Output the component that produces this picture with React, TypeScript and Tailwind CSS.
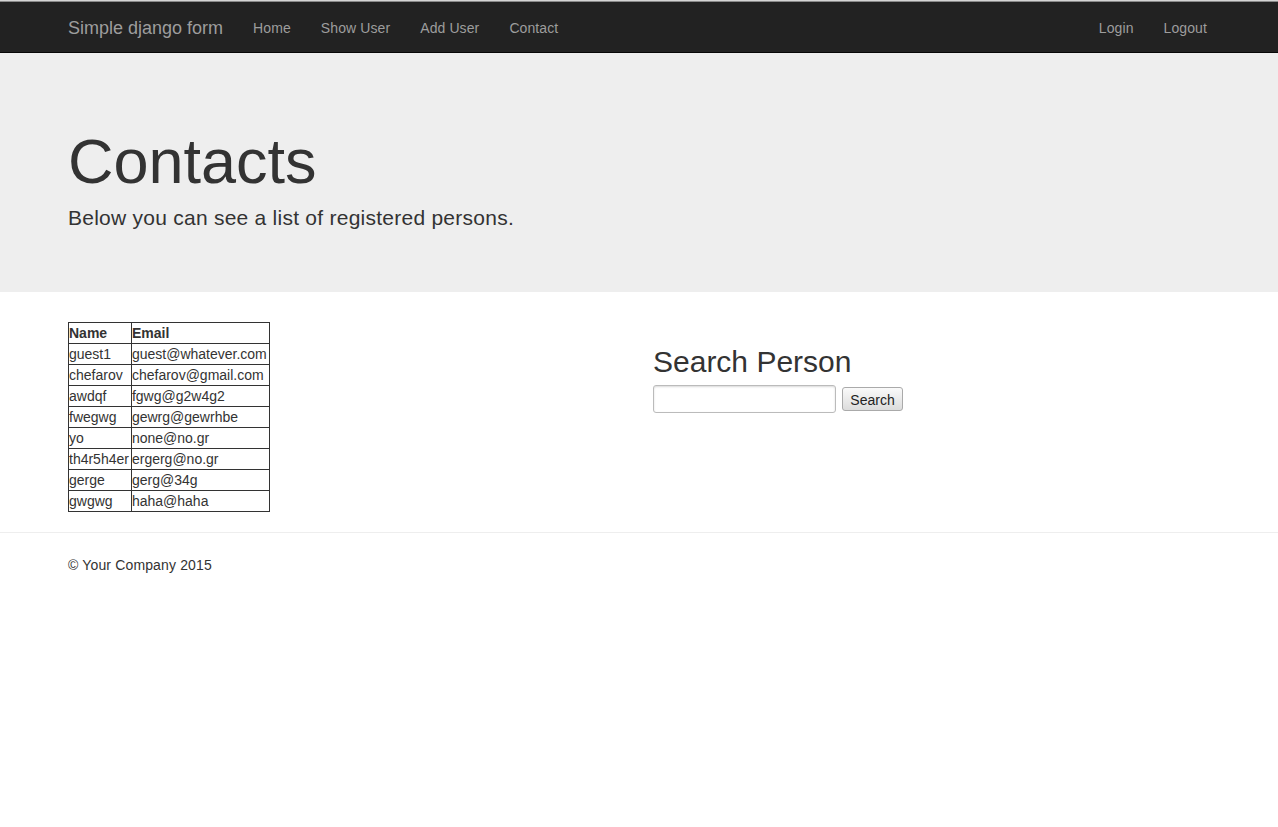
import React from "react";

const rows: [string, string][] = [
  ["guest1", "guest@whatever.com"],
  ["chefarov", "chefarov@gmail.com"],
  ["awdqf", "fgwg@g2w4g2"],
  ["fwegwg", "gewrg@gewrhbe"],
  ["yo", "none@no.gr"],
  ["th4r5h4er", "ergerg@no.gr"],
  ["gerge", "gerg@34g"],
  ["gwgwg", "haha@haha"],
];

export default function App() {
  return (
    <div
      className="min-h-[827px] bg-white text-[#333] text-[14px] leading-[20px]"
      style={{ fontFamily: '"Liberation Sans", Arial, sans-serif' }}
    >
      <div className="h-px bg-[#d4d4d4]" />
      <div className="h-px bg-[#8a8a8a]" />
      <nav className="h-[51px] bg-[#222] border-b border-[#080808]">
        <div className="w-[1170px] mx-auto px-[15px] flex items-center h-[50px] pt-[2px]">
          <a className="text-[18px] leading-[20px] text-[#9d9d9d] -ml-[16px] px-[15px] py-[15px]">
            Simple django form
          </a>
          <ul className="flex tracking-[0.1px]">
            {["Home", "Show User", "Add User", "Contact"].map((t) => (
              <li key={t}>
                <a className="block px-[15px] py-[15px] text-[#9d9d9d]">{t}</a>
              </li>
            ))}
          </ul>
          <ul className="flex ml-auto -mr-[13px] tracking-[0.1px]">
            {["Login", "Logout"].map((t) => (
              <li key={t}>
                <a className="block px-[15px] py-[15px] text-[#9d9d9d]">{t}</a>
              </li>
            ))}
          </ul>
        </div>
      </nav>
      <div className="bg-[#eee] pt-[48px] pb-[48px]">
        <div className="w-[1170px] mx-auto px-[15px] pt-[26px]">
          <h1 className="text-[63px] leading-[69px] mb-[7px] -ml-px">Contacts</h1>
          <p className="text-[21px] leading-[30px] mb-[11px] -ml-px tracking-[0.25px]">
            Below you can see a list of registered persons.
          </p>
        </div>
      </div>
      <div className="w-[1170px] mx-auto px-[15px]">
        <div className="flex -mx-[15px]">
          <div className="w-1/2 px-[15px] pt-[30px]">
            <table className="border-collapse border border-[#333] -ml-px">
              <thead>
                <tr>
                  <th className="border border-[#333] p-0 pr-[2px] pt-px leading-[19px] text-left font-bold">Name</th>
                  <th className="border border-[#333] p-0 pr-[2px] pt-px leading-[19px] text-left font-bold">Email</th>
                </tr>
              </thead>
              <tbody>
                {rows.map(([n, e]) => (
                  <tr key={n}>
                    <td className="border border-[#333] p-0 pr-[2px] pt-px leading-[19px]">{n}</td>
                    <td className="border border-[#333] p-0 pr-[2px] pt-px leading-[19px]">{e}</td>
                  </tr>
                ))}
              </tbody>
            </table>
          </div>
          <div className="w-1/2 px-[15px] pt-[53px]">
            <h2 className="text-[30px] leading-[33px] mb-[7px] -ml-px">Search Person</h2>
            <div className="flex items-center gap-[6px] -ml-px">
              <input
                type="text"
                className="w-[183px] h-[28px] border border-[#bbb] rounded-[3px] bg-white shadow-[inset_0_1px_2px_rgba(0,0,0,0.15)] outline-none"
              />
              <button className="h-[24px] w-[61px] border border-[#aaa] rounded-[3px] bg-gradient-to-b from-[#fafafa] to-[#dcdcdc] text-[14px] leading-[20px] text-[#222] pt-[2px]">
                Search
              </button>
            </div>
          </div>
        </div>
      </div>
      <div className="border-t border-[#eee] mt-[20px]" />
      <div className="w-[1170px] mx-auto px-[15px] pt-[22px]">
        <p className="-ml-px tracking-[0.15px]">© Your Company 2015</p>
      </div>
    </div>
  );
}
